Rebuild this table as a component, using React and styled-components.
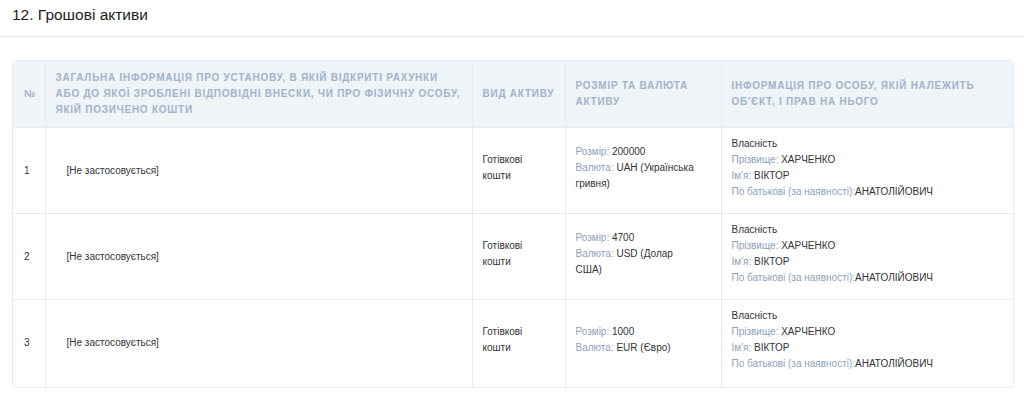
import React from 'react';
import styled, { createGlobalStyle } from 'styled-components';

const GlobalStyle = createGlobalStyle`
  body {
    margin: 0;
    background: #fff;
    font-family: "Liberation Sans", Arial, sans-serif;
    color: #333;
  }
`;

const SectionHeader = styled.div`
  height: 37px;
  box-sizing: border-box;
  padding: 6px 12px 0;
  border-bottom: 1px solid #e8e8e8;
`;

const Title = styled.h2`
  margin: 0;
  font-size: 15.5px;
  font-weight: normal;
  line-height: 18px;
  color: #222;
`;

const Card = styled.div`
  margin: 23px 10px 0 12px;
  border: 1px solid #e6ebf1;
  border-radius: 4px;
  overflow: hidden;
  box-shadow: 0 1px 2px rgba(0, 0, 0, 0.05);
`;

const Table = styled.table`
  width: 100%;
  border-collapse: collapse;
  table-layout: fixed;
  font-size: 10px;
  line-height: 16px;
`;

const Th = styled.th`
  background: #eff4f9;
  color: #a3b2c9;
  font-weight: bold;
  text-transform: uppercase;
  letter-spacing: 0.75px;
  text-align: left;
  padding: 9px 6px 9px ${p => (p.$narrow ? '11px' : '10px')};
  height: 48px;
  vertical-align: middle;
  border-right: 1px solid #e6ebf1;
  border-bottom: 1px solid #e6ebf1;
  &:last-child { border-right: none; }
`;

const Td = styled.td`
  padding: 8px 20px 7px 10px;
  padding-left: ${p => (p.$indent ? '21px' : p.$narrow ? '11px' : '10px')};
  text-align: left;
  vertical-align: middle;
  color: #333;
  border-right: 1px solid #e6ebf1;
  border-bottom: 1px solid #e6ebf1;
  &:last-child { border-right: none; }
  tr:last-child > & {
    border-bottom: none;
    padding-bottom: 9px;
  }
`;

const Block = styled.div`
  margin-bottom: 6px;
`;

const Line = styled.div``;

const Label = styled.span`
  color: #8d9fba;
`;

const rows = [
  { n: 1, size: '200000', cur: 'UAH (Українська гривня)' },
  { n: 2, size: '4700', cur: 'USD (Долар США)' },
  { n: 3, size: '1000', cur: 'EUR (Євро)' },
];

export default function App() {
  return (
    <>
      <GlobalStyle />
      <SectionHeader>
        <Title>12. Грошові активи</Title>
      </SectionHeader>
      <Card>
        <Table>
          <colgroup>
            <col style={{ width: 32 }} />
            <col style={{ width: 427 }} />
            <col style={{ width: 93 }} />
            <col style={{ width: 156 }} />
            <col />
          </colgroup>
          <thead>
            <tr>
              <Th $narrow>№</Th>
              <Th>Загальна інформація про установу, в якій відкриті рахунки або до якої зроблені відповідні внески, чи про фізичну особу, якій позичено кошти</Th>
              <Th>Вид активу</Th>
              <Th>Розмір та валюта активу</Th>
              <Th>Інформація про особу, якій належить об'єкт, і прав на нього</Th>
            </tr>
          </thead>
          <tbody>
            {rows.map(r => (
              <tr key={r.n}>
                <Td $narrow>{r.n}</Td>
                <Td $indent>[Не застосовується]</Td>
                <Td><Block>Готівкові кошти</Block></Td>
                <Td>
                  <Block>
                    <Line><Label>Розмір: </Label>{r.size}</Line>
                    <Line><Label>Валюта: </Label>{r.cur}</Line>
                  </Block>
                </Td>
                <Td>
                  <Block>
                    <Line>Власність</Line>
                    <Line><Label>Прізвище: </Label>ХАРЧЕНКО</Line>
                    <Line><Label>Ім'я: </Label>ВІКТОР</Line>
                    <Line><Label>По батькові (за наявності):</Label>АНАТОЛІЙОВИЧ</Line>
                  </Block>
                </Td>
              </tr>
            ))}
          </tbody>
        </Table>
      </Card>
    </>
  );
}
